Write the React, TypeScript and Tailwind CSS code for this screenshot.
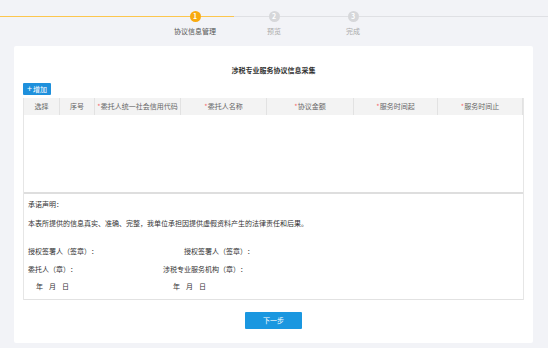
import React from 'react'

const columns = [
  { label: '选择', w: 'w-[36px]', req: false },
  { label: '序号', w: 'w-[35px]', req: false },
  { label: '委托人统一社会信用代码', w: 'w-[86px]', req: true },
  { label: '委托人名称', w: 'w-[86px]', req: true },
  { label: '协议金额', w: 'w-[87px]', req: true },
  { label: '服务时间起', w: 'w-[84px]', req: true },
  { label: '服务时间止', w: 'w-[85px]', req: true },
]

const Stepper: React.FC = () => (
  <div className="h-[46px]">
    {/* line + circles */}
    <div className="flex items-center pt-[10.5px]">
      <div className="w-[189.5px] h-px bg-[#fcc64e]" />
      <div className="w-[11px] h-[11px] rounded-full bg-[#f8aa10] text-white text-[7px] leading-[11px] text-center font-bold">1</div>
      <div className="w-[33.5px] h-px bg-[#fcc64e]" />
      <div className="w-[34.5px] h-px bg-[#dfe0e4]" />
      <div className="w-[11px] h-[11px] rounded-full bg-[#d6d7da] text-white text-[7px] leading-[11px] text-center font-bold">2</div>
      <div className="w-[68px] h-px bg-[#dfe0e4]" />
      <div className="w-[11px] h-[11px] rounded-full bg-[#d6d7da] text-white text-[7px] leading-[11px] text-center font-bold">3</div>
      <div className="flex-1 h-px bg-[#dfe0e4]" />
    </div>
    {/* labels */}
    <div className="flex mt-[4.5px] text-[7px] leading-[10px]">
      <div className="ml-[165px] w-[60px] text-center text-[#555]">协议信息管理</div>
      <div className="ml-[19px] w-[60px] text-center text-[#aaa]">预览</div>
      <div className="ml-[19px] w-[60px] text-center text-[#aaa]">完成</div>
    </div>
  </div>
)

const App: React.FC = () => {
  return (
    <div className="w-[548px] h-[348px] overflow-hidden bg-[#f2f3f7] font-['Noto_Sans_CJK_SC','Noto_Sans',sans-serif] [text-spacing-trim:space-all]">
      <Stepper />

      {/* Card */}
      <div className="ml-[14px] w-[519px] h-[297px] bg-white rounded-[2px] px-[9px]">
        <div className="pt-[19px] text-center text-[7px] leading-[10px] font-bold text-[#333]">
          涉税专业服务协议信息采集
        </div>

        <div className="mt-[8px] w-[28px] h-[12px] bg-[#1e90dc] rounded-[1px] text-white text-[7px] leading-[12px] flex items-center justify-center">
          <span className="text-[9px] leading-[12px] mr-[1px]">+</span>增加
        </div>

        {/* Table */}
        <div className="mt-[3px] w-[501px] border-x border-[#e6e6e6]">
          <div className="flex h-[17px] bg-[#f3f3f3]">
            {columns.map((c) => (
              <div
                key={c.label}
                className={`${c.w} border-r border-[#e2e2e2] text-[7px] leading-[17px] text-center text-[#666] whitespace-nowrap`}
              >
                {c.req && <span className="text-[#f56c6c]">*</span>}
                {c.label}
              </div>
            ))}
            <div className="flex-1" />
          </div>
          <div className="h-[79px] bg-white border-b-2 border-[#dedede]" />

          {/* Commitment */}
          <div className="h-[106px] border-b border-[#e2e2e2] pl-[4px] text-[7px] leading-[10px] text-[#333]">
            <div className="pt-[5px]">承诺声明：</div>
            <div className="mt-[9px]">本表所提供的信息真实、准确、完整，我单位承担因提供虚假资料产生的法律责任和后果。</div>
            <div className="mt-[18px] flex">
              <span className="w-[156px]">授权签署人（签章）：</span>
              <span>授权签署人（签章）：</span>
            </div>
            <div className="mt-[8px] flex">
              <span className="w-[135px]">委托人（章）：</span>
              <span>涉税专业服务机构（章）：</span>
            </div>
            <div className="mt-[7px] flex pl-[8px]">
              <span className="w-[137px] flex gap-[6px]">
                <span>年</span><span>月</span><span>日</span>
              </span>
              <span className="flex gap-[6px]">
                <span>年</span><span>月</span><span>日</span>
              </span>
            </div>
          </div>
        </div>

        <div className="mt-[12px] flex justify-center">
          <div className="w-[57px] h-[17px] bg-[#1a97e0] rounded-[1px] text-white text-[7px] leading-[17px] text-center">
            下一步
          </div>
        </div>
      </div>
    </div>
  )
}

export default App
